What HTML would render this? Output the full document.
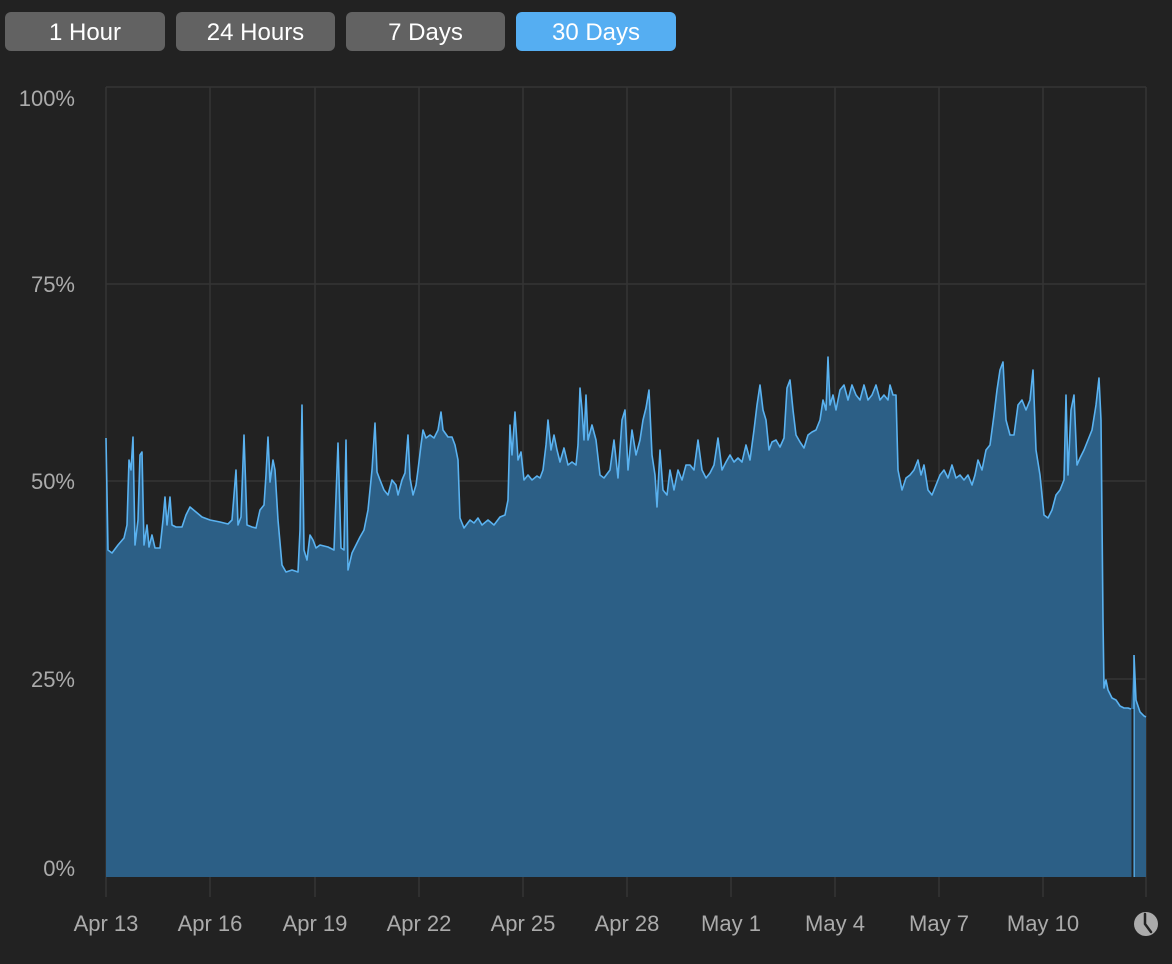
<!DOCTYPE html>
<html><head><meta charset="utf-8"><style>
html,body{margin:0;padding:0;background:#222222;width:1172px;height:964px;overflow:hidden}
svg{display:block}
text{font-family:"Liberation Sans",sans-serif}
</style></head><body>
<svg width="1172" height="964" viewBox="0 0 1172 964" xmlns="http://www.w3.org/2000/svg">
<rect width="1172" height="964" fill="#222222"/>
<g>
<rect x="5" y="12" width="160" height="39" rx="6" fill="#626262"/>
<rect x="176" y="12" width="159" height="39" rx="6" fill="#626262"/>
<rect x="346" y="12" width="159" height="39" rx="6" fill="#626262"/>
<rect x="516" y="12" width="160" height="39" rx="6" fill="#55aef2"/>
<g fill="#ffffff" font-size="24" text-anchor="middle">
<text x="85" y="40">1 Hour</text>
<text x="255.5" y="40">24 Hours</text>
<text x="425.5" y="40">7 Days</text>
<text x="596" y="40">30 Days</text>
</g>
</g>
<g stroke="#353535" stroke-width="1.5">
<line x1="106" y1="87" x2="1146" y2="87"/>
<line x1="106" y1="284" x2="1146" y2="284"/>
<line x1="106" y1="481" x2="1146" y2="481"/>
<line x1="106" y1="679" x2="1146" y2="679"/>
<line x1="106" y1="87" x2="106" y2="897"/>
<line x1="210" y1="87" x2="210" y2="897"/>
<line x1="315" y1="87" x2="315" y2="897"/>
<line x1="419" y1="87" x2="419" y2="897"/>
<line x1="523" y1="87" x2="523" y2="897"/>
<line x1="627" y1="87" x2="627" y2="897"/>
<line x1="731" y1="87" x2="731" y2="897"/>
<line x1="835" y1="87" x2="835" y2="897"/>
<line x1="939" y1="87" x2="939" y2="897"/>
<line x1="1043" y1="87" x2="1043" y2="897"/>
<line x1="1146" y1="87" x2="1146" y2="897"/>
</g>
<path fill="#2c5f86" stroke="none" d="M106,877 L106,438 L108,550 L112,553 L118,545 L124,538 L127,525 L129,460 L131,470 L133,437 L135,545 L138,520 L140,455 L142,452 L144,545 L147,525 L149,547 L152,535 L155,548 L160,548 L163,520 L165,497 L167,525 L170,497 L172,525 L176,527 L182,527 L186,515 L190,507 L196,512 L202,517 L210,520 L220,522 L228,524 L232,520 L236,470 L238,525 L241,517 L244,435 L247,525 L252,527 L256,528 L260,510 L264,505 L266,475 L268,437 L270,482 L273,460 L275,470 L278,520 L282,565 L286,572 L292,570 L298,572 L300,530 L302,405 L304,550 L307,560 L310,535 L313,540 L316,548 L320,545 L328,547 L334,550 L338,443 L341,548 L344,550 L346,440 L348,570 L352,553 L356,545 L360,537 L364,530 L368,510 L372,470 L375,423 L377,472 L380,480 L384,490 L388,495 L392,480 L396,485 L398,495 L402,480 L405,473 L408,435 L410,478 L413,495 L416,485 L418,470 L421,445 L423,430 L426,438 L430,435 L434,438 L438,430 L441,412 L443,430 L448,437 L452,437 L455,445 L458,460 L460,518 L464,528 L470,520 L474,523 L478,518 L482,525 L488,520 L494,525 L500,517 L505,515 L508,500 L510,425 L512,455 L515,412 L518,460 L521,452 L524,480 L528,475 L532,480 L537,476 L540,478 L543,470 L546,445 L548,420 L551,450 L554,435 L557,450 L560,462 L564,448 L568,465 L572,462 L576,465 L578,445 L580,388 L582,410 L584,440 L586,395 L588,440 L592,425 L596,440 L600,475 L604,478 L610,470 L614,440 L618,478 L622,420 L625,410 L628,470 L632,430 L636,455 L640,440 L643,420 L646,408 L649,390 L652,455 L655,475 L657,507 L660,450 L663,490 L667,495 L670,470 L674,490 L678,470 L682,480 L686,465 L690,465 L694,470 L698,440 L702,470 L706,478 L710,473 L714,465 L718,438 L722,470 L726,462 L730,455 L734,462 L738,458 L742,462 L746,445 L750,460 L754,430 L757,405 L760,385 L763,410 L766,420 L769,450 L772,442 L776,440 L780,447 L784,438 L787,388 L790,380 L793,410 L796,435 L800,442 L804,448 L808,435 L812,432 L816,430 L820,420 L823,400 L826,410 L828,357 L830,405 L833,395 L836,410 L840,390 L844,385 L848,400 L852,385 L856,395 L860,400 L864,385 L868,400 L872,395 L876,385 L880,400 L884,395 L888,400 L890,385 L893,395 L896,395 L898,470 L902,490 L906,478 L910,475 L914,470 L918,460 L921,475 L924,465 L928,490 L932,495 L936,485 L940,475 L944,470 L948,478 L952,465 L956,478 L960,475 L964,480 L968,475 L972,485 L975,475 L978,460 L982,470 L986,450 L990,445 L994,415 L997,390 L1000,370 L1003,362 L1006,420 L1010,435 L1014,435 L1018,405 L1022,400 L1026,410 L1030,400 L1033,370 L1036,450 L1040,475 L1044,515 L1048,518 L1052,510 L1056,495 L1060,490 L1064,480 L1066,395 L1068,475 L1071,410 L1074,395 L1077,465 L1080,458 L1084,450 L1088,440 L1092,430 L1096,405 L1099,378 L1101,420 L1103,620 L1104,688 L1106,680 L1108,690 L1112,698 L1116,700 L1120,706 L1124,708 L1128,708 L1131,709 L1134,655 L1136,700 L1140,712 L1144,716 L1146,717 L1146,877 Z"/>
<polyline fill="none" stroke="#5ab2f0" stroke-width="1.6" stroke-linejoin="round" points="106,438 108,550 112,553 118,545 124,538 127,525 129,460 131,470 133,437 135,545 138,520 140,455 142,452 144,545 147,525 149,547 152,535 155,548 160,548 163,520 165,497 167,525 170,497 172,525 176,527 182,527 186,515 190,507 196,512 202,517 210,520 220,522 228,524 232,520 236,470 238,525 241,517 244,435 247,525 252,527 256,528 260,510 264,505 266,475 268,437 270,482 273,460 275,470 278,520 282,565 286,572 292,570 298,572 300,530 302,405 304,550 307,560 310,535 313,540 316,548 320,545 328,547 334,550 338,443 341,548 344,550 346,440 348,570 352,553 356,545 360,537 364,530 368,510 372,470 375,423 377,472 380,480 384,490 388,495 392,480 396,485 398,495 402,480 405,473 408,435 410,478 413,495 416,485 418,470 421,445 423,430 426,438 430,435 434,438 438,430 441,412 443,430 448,437 452,437 455,445 458,460 460,518 464,528 470,520 474,523 478,518 482,525 488,520 494,525 500,517 505,515 508,500 510,425 512,455 515,412 518,460 521,452 524,480 528,475 532,480 537,476 540,478 543,470 546,445 548,420 551,450 554,435 557,450 560,462 564,448 568,465 572,462 576,465 578,445 580,388 582,410 584,440 586,395 588,440 592,425 596,440 600,475 604,478 610,470 614,440 618,478 622,420 625,410 628,470 632,430 636,455 640,440 643,420 646,408 649,390 652,455 655,475 657,507 660,450 663,490 667,495 670,470 674,490 678,470 682,480 686,465 690,465 694,470 698,440 702,470 706,478 710,473 714,465 718,438 722,470 726,462 730,455 734,462 738,458 742,462 746,445 750,460 754,430 757,405 760,385 763,410 766,420 769,450 772,442 776,440 780,447 784,438 787,388 790,380 793,410 796,435 800,442 804,448 808,435 812,432 816,430 820,420 823,400 826,410 828,357 830,405 833,395 836,410 840,390 844,385 848,400 852,385 856,395 860,400 864,385 868,400 872,395 876,385 880,400 884,395 888,400 890,385 893,395 896,395 898,470 902,490 906,478 910,475 914,470 918,460 921,475 924,465 928,490 932,495 936,485 940,475 944,470 948,478 952,465 956,478 960,475 964,480 968,475 972,485 975,475 978,460 982,470 986,450 990,445 994,415 997,390 1000,370 1003,362 1006,420 1010,435 1014,435 1018,405 1022,400 1026,410 1030,400 1033,370 1036,450 1040,475 1044,515 1048,518 1052,510 1056,495 1060,490 1064,480 1066,395 1068,475 1071,410 1074,395 1077,465 1080,458 1084,450 1088,440 1092,430 1096,405 1099,378 1101,420 1103,620 1104,688 1106,680 1108,690 1112,698 1116,700 1120,706 1124,708 1128,708 1131,709"/>
<polyline fill="none" stroke="#5ab2f0" stroke-width="1.6" points="1134,877 1134,655 1136,700 1140,712 1144,716 1146,717"/>
<line x1="1132.5" y1="709" x2="1132.5" y2="877" stroke="#222222" stroke-width="2"/>
<g fill="#ababab" font-size="22" text-anchor="end">
<text x="75" y="106">100%</text>
<text x="75" y="292">75%</text>
<text x="75" y="489">50%</text>
<text x="75" y="687">25%</text>
<text x="75" y="876">0%</text>
</g>
<g fill="#ababab" font-size="22" text-anchor="middle">
<text x="106" y="931">Apr 13</text>
<text x="210" y="931">Apr 16</text>
<text x="315" y="931">Apr 19</text>
<text x="419" y="931">Apr 22</text>
<text x="523" y="931">Apr 25</text>
<text x="627" y="931">Apr 28</text>
<text x="731" y="931">May 1</text>
<text x="835" y="931">May 4</text>
<text x="939" y="931">May 7</text>
<text x="1043" y="931">May 10</text>
</g>
<circle cx="1146" cy="924" r="12" fill="#ababab"/>
<path d="M1145,914 L1145,924 L1151,932" stroke="#222222" stroke-width="2.5" fill="none" stroke-linecap="round"/>
</svg>
</body></html>
